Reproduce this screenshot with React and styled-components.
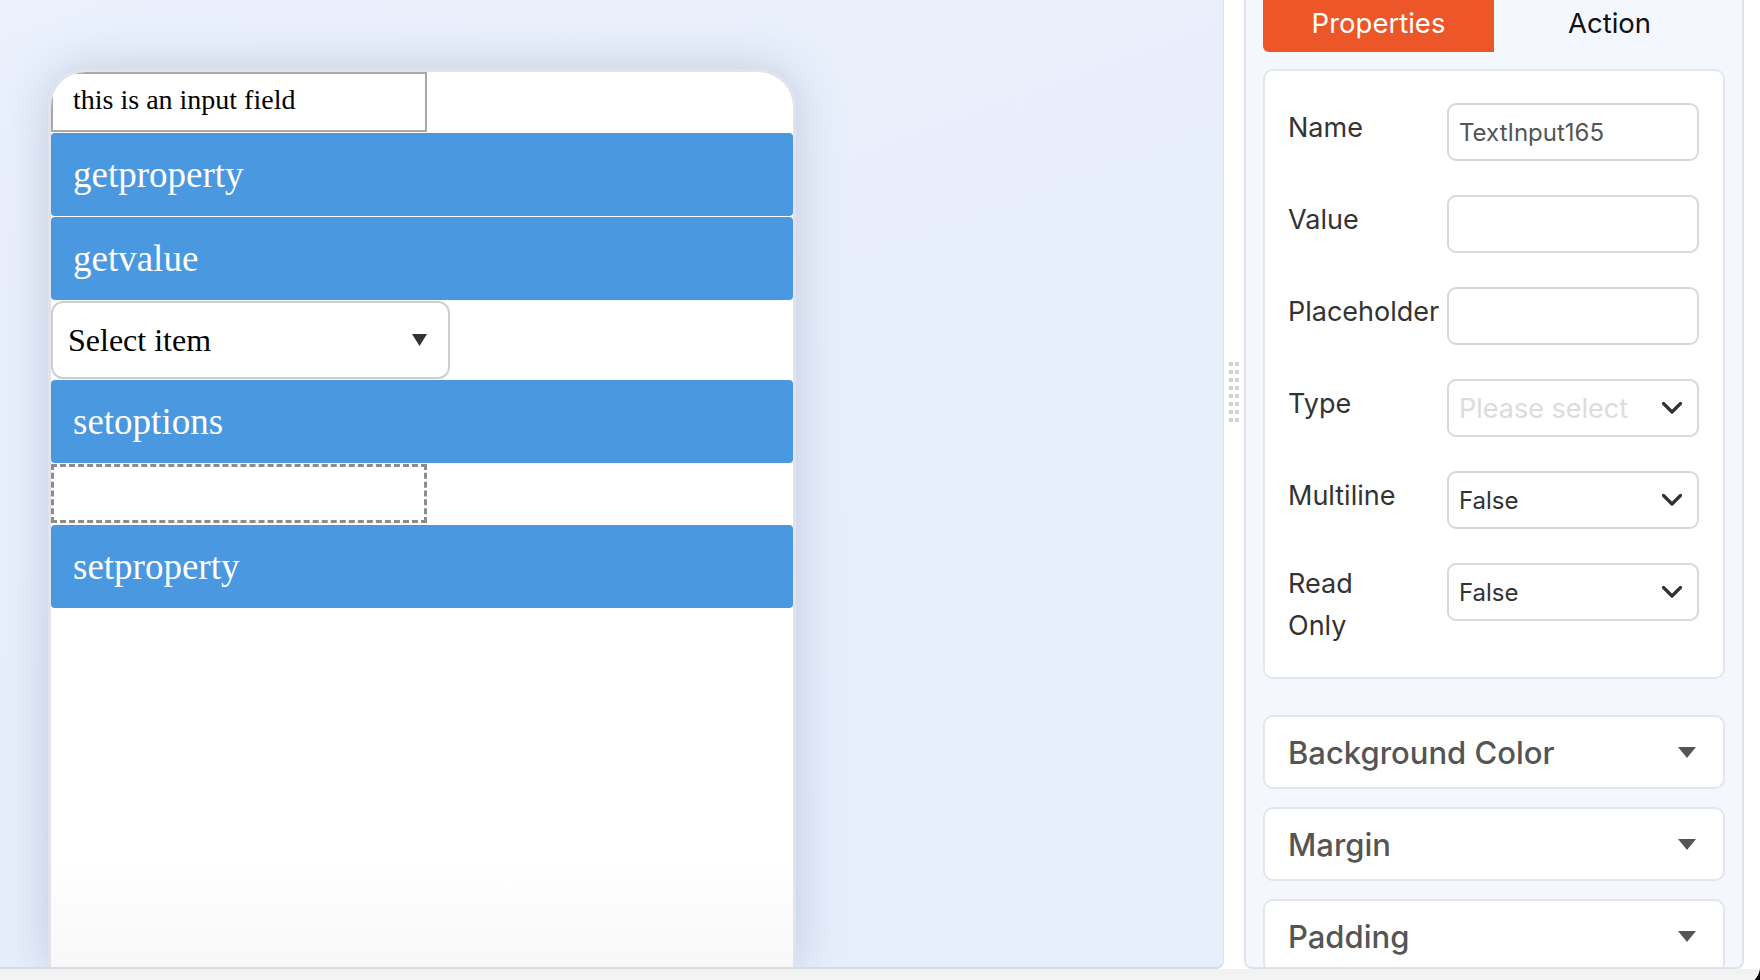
import React from 'react';
import styled, { createGlobalStyle } from 'styled-components';

const Global = createGlobalStyle`
  html, body {
    margin: 0;
    padding: 0;
    overflow: hidden;
    background: #000;
  }
  * { box-sizing: border-box; }
`;

const Window = styled.div`
  width: 1760px;
  height: 986px;
  background: #fff;
  border-bottom-right-radius: 20px;
  overflow: hidden;
  display: flex;
  flex-direction: column;
`;

const Main = styled.div`
  display: flex;
  height: 969px;
  flex: none;
`;

const BottomBar = styled.div`
  flex: 1;
  background: linear-gradient(#f1f1f1, #f5f5f5);
`;

/* ---------- canvas ---------- */
const Canvas = styled.div`
  width: 1224px;
  flex: none;
  height: 100%;
  display: flex;
  flex-direction: column;
  padding: 69px 0 0 48px;
  background: linear-gradient(160deg, #eaf0fc 0%, #e7eefb 60%, #e6edfb 100%);
  border-right: 1px solid #dde2ea;
  border-bottom: 2px solid #d8dce2;
  border-bottom-right-radius: 8px;
  overflow: hidden;
`;

const Phone = styled.div`
  width: 748px;
  flex: 1;
  background: linear-gradient(to bottom, #ffffff 88%, #f8f8f8 100%);
  border: 3px solid #e0e4ea;
  border-bottom: none;
  border-radius: 38px 38px 0 0;
  box-shadow: 0 0 46px rgba(110, 128, 165, 0.32);
  overflow: hidden;
`;

const DemoInput = styled.div`
  width: 376px;
  height: 60px;
  border: 2px solid #a9a9a9;
  padding: 0 0 4px 20px;
  display: flex;
  align-items: center;
  font-family: "Liberation Serif", "Times New Roman", serif;
  font-size: 28px;
  color: #000;
  background: #fff;
  margin-bottom: 1px;
`;

const BlueButton = styled.div`
  height: 83px;
  margin: 1px 0;
  background: #4a98e0;
  border-radius: 4px;
  display: flex;
  align-items: center;
  padding-left: 22px;
  font-family: "Liberation Serif", "Times New Roman", serif;
  font-size: 37px;
  color: #fff;
`;

const DemoSelect = styled.div`
  width: 399px;
  height: 78px;
  margin: 1px 0;
  border: 2px solid #cfcfcf;
  border-radius: 12px;
  background: #fff;
  display: flex;
  align-items: center;
  justify-content: space-between;
  padding: 0 21px 0 15px;
  font-family: "Liberation Serif", "Times New Roman", serif;
  font-size: 32px;
  color: #000;
`;

const DashedBox = styled.div`
  width: 376px;
  height: 59px;
  margin: 1px 0 2px;
  border: 3px dashed #8c8c8c;
  background: #fff;
`;

/* ---------- splitter ---------- */
const Splitter = styled.div`
  width: 20px;
  flex: none;
  background: #fff;
  display: flex;
  justify-content: center;
  padding-top: 362px;
`;

const Grip = styled.div`
  display: grid;
  grid-template-columns: 4px 4px;
  grid-auto-rows: 4px;
  column-gap: 2px;
  row-gap: 4px;
  height: max-content;
`;

const Dot = styled.span`
  background: #d3d3d3;
`;

/* ---------- panel ---------- */
const Panel = styled.div`
  width: 500px;
  flex: none;
  height: 100%;
  background: #f4f8fe;
  border: 2px solid #e0e4ea;
  border-top: none;
  border-radius: 0 0 8px 8px;
  padding: 0 17px;
  overflow: hidden;
  font-family: Inter, "Noto Sans", sans-serif;
`;

const RightFill = styled.div`
  flex: 1;
  background: #fff;
`;

const Tabs = styled.div`
  display: flex;
  height: 52px;
`;

const Tab = styled.div`
  flex: 1;
  display: flex;
  align-items: center;
  justify-content: center;
  padding-bottom: 6px;
  font-size: 27.5px;
  color: ${(p) => (p.$active ? '#fff' : '#111')};
  background: ${(p) => (p.$active ? '#ec5629' : 'transparent')};
  border-radius: 0 0 0 6px;
`;

const Card = styled.div`
  margin-top: 17px;
  background: #fff;
  border: 2px solid #e3e7ed;
  border-radius: 10px;
  padding: 32px 24px 30px 23px;
  display: flex;
  flex-direction: column;
  gap: 34px;
`;

const Row = styled.div`
  display: flex;
  align-items: flex-start;
  justify-content: space-between;
`;

const Label = styled.div`
  width: 115px;
  margin-top: ${(p) => (p.$multi ? '0' : '4px')};
  font-size: 27px;
  line-height: 42px;
  color: #333;
  white-space: normal;
`;

const Field = styled.div`
  width: 252px;
  height: 58px;
  flex: none;
  border: 2px solid #d9d9d9;
  border-radius: 9px;
  background: #fff;
  display: flex;
  align-items: center;
  justify-content: space-between;
  padding: 0 14px 0 10px;
  font-size: ${(p) => (p.$placeholder ? '27px' : '24px')};
  color: ${(p) => (p.$placeholder ? '#dcdcdc' : p.$dark ? '#333' : '#555')};
`;

const Accordion = styled.div`
  height: 74px;
  margin-top: ${(p) => (p.$first ? '36px' : '18px')};
  background: #fff;
  border: 2px solid #e3e7ed;
  border-radius: 10px;
  display: flex;
  align-items: center;
  justify-content: space-between;
  padding: 0 27px 0 23px;
  font-size: 31px;
  font-weight: 500;
  color: #555;
`;

const Chevron = () => (
  <svg width="22" height="14" viewBox="0 0 22 14">
    <polyline
      points="2.5,2.5 11,11 19.5,2.5"
      fill="none"
      stroke="#333"
      strokeWidth="3.2"
      strokeLinecap="round"
      strokeLinejoin="round"
    />
  </svg>
);

const Caret = ({ color = '#555', w = 18, h = 11 }) => (
  <svg width={w} height={h} viewBox={`0 0 ${w} ${h}`}>
    <polygon points={`0,0 ${w},0 ${w / 2},${h}`} fill={color} />
  </svg>
);

const rows = [
  { label: 'Name', value: 'TextInput165' },
  { label: 'Value', value: '' },
  { label: 'Placeholder', value: '' },
  { label: 'Type', value: 'Please select', select: true, placeholder: true },
  { label: 'Multiline', value: 'False', select: true },
  { label: 'Read Only', value: 'False', select: true, multi: true },
];

export default function App() {
  return (
    <>
      <Global />
      <Window>
        <Main>
          <Canvas>
            <Phone>
              <DemoInput>this is an input field</DemoInput>
              <BlueButton>getproperty</BlueButton>
              <BlueButton>getvalue</BlueButton>
              <DemoSelect>
                <span>Select item</span>
                <Caret color="#333" w={15} h={12} />
              </DemoSelect>
              <BlueButton>setoptions</BlueButton>
              <DashedBox />
              <BlueButton>setproperty</BlueButton>
            </Phone>
          </Canvas>
          <Splitter>
            <Grip>
              {Array.from({ length: 16 }).map((_, i) => (
                <Dot key={i} />
              ))}
            </Grip>
          </Splitter>
          <Panel>
            <Tabs>
              <Tab $active>Properties</Tab>
              <Tab>Action</Tab>
            </Tabs>
            <Card>
              {rows.map((r) => (
                <Row key={r.label}>
                  <Label $multi={r.multi}>{r.label}</Label>
                  <Field $placeholder={r.placeholder} $dark={r.select && !r.placeholder}>
                    <span>{r.value}</span>
                    {r.select && <Chevron />}
                  </Field>
                </Row>
              ))}
            </Card>
            <Accordion $first>
              <span>Background Color</span>
              <Caret />
            </Accordion>
            <Accordion>
              <span>Margin</span>
              <Caret />
            </Accordion>
            <Accordion>
              <span>Padding</span>
              <Caret />
            </Accordion>
          </Panel>
          <RightFill />
        </Main>
        <BottomBar />
      </Window>
    </>
  );
}
